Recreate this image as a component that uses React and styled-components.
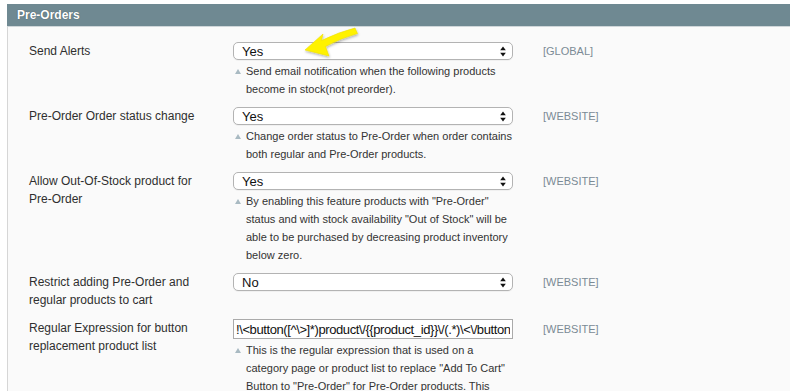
import React from "react";
import styled, { createGlobalStyle } from "styled-components";

const GlobalStyle = createGlobalStyle`
  body {
    margin: 0;
    background: #ffffff;
    font-family: "Liberation Sans", Arial, Helvetica, sans-serif;
  }
`;

const Page = styled.div`
  position: relative;
  padding: 4px 0 0 7px;
  width: 790px;
  height: 391px;
  box-sizing: border-box;
  overflow: hidden;
`;

const SectionHead = styled.div`
  height: 22px;
  background: #6f8992;
  border-bottom: 1px solid #cfd6d9;
  padding-left: 10px;
  display: flex;
  align-items: center;
`;

const SectionTitle = styled.h4`
  margin: 0;
  font-size: 12px;
  font-weight: bold;
  color: #ffffff;
  text-shadow: 0 0 1px rgba(0, 0, 0, 0.45);
`;

const Fieldset = styled.div`
  background: #fafafa;
  border-left: 1px solid #d6d6d6;
  padding: 15px 0 0 21px;
  min-height: 400px;
`;

const Row = styled.div`
  display: grid;
  grid-template-columns: 204px 280px 30px auto;
  align-items: start;
  padding-bottom: ${(p) => p.gap || 9}px;
`;

const Label = styled.div`
  font-size: 12px;
  line-height: 18px;
  color: #2f2f2f;
  padding-right: 20px;
`;

const Value = styled.div`
  display: flex;
  flex-direction: column;
`;

const SelectBox = styled.div`
  height: 18px;
  box-sizing: border-box;
  border: 1px solid #b3b3b3;
  border-radius: 5px;
  background: #ffffff;
  display: flex;
  align-items: center;
  justify-content: space-between;
  padding: 0 6px 0 8px;
  font-size: 13px;
  color: #111;
  box-shadow: 0 1px 0 rgba(0, 0, 0, 0.04);
`;

const TextInput = styled.input`
  height: 20px;
  box-sizing: border-box;
  border: 1px solid #aaaaaa;
  background: #ffffff;
  font-family: "Liberation Sans", Arial, sans-serif;
  font-size: 13px;
  letter-spacing: -0.4px;
  color: #111;
  padding: 0 2px;
  margin: 0;
  outline: none;
  width: 280px;
`;

const Note = styled.p`
  position: relative;
  margin: 2px 0 0;
  padding-left: 13px;
  font-size: 11px;
  line-height: 18px;
  color: #333;

  &::before {
    content: "";
    position: absolute;
    left: 2px;
    top: 7px;
    border-left: 3.5px solid transparent;
    border-right: 3.5px solid transparent;
    border-bottom: 5px solid #a9bac2;
  }
`;

const Scope = styled.div`
  grid-column: 4;
  font-size: 11px;
  line-height: 18px;
  padding-top: ${(p) => p.offset || 0}px;
  color: #7b8a95;
`;

const Arrow = styled.svg`
  position: absolute;
  left: 295px;
  top: 24px;
  overflow: visible;
`;

const UpDown = () => (
  <svg width="6" height="11" viewBox="0 0 6 11">
    <path d="M3 0.5 L5.8 4.3 L0.2 4.3 Z" fill="#111" />
    <path d="M3 10.5 L5.8 6.7 L0.2 6.7 Z" fill="#111" />
  </svg>
);

const Select = ({ value }) => (
  <SelectBox>
    <span>{value}</span>
    <UpDown />
  </SelectBox>
);

const rows = [
  {
    label: "Send Alerts",
    value: "Yes",
    scope: "[GLOBAL]",
    note: "Send email notification when the following products become in stock(not preorder).",
  },
  {
    label: "Pre-Order Order status change",
    value: "Yes",
    scope: "[WEBSITE]",
    note: "Change order status to Pre-Order when order contains both regular and Pre-Order products.",
  },
  {
    label: "Allow Out-Of-Stock product for Pre-Order",
    value: "Yes",
    scope: "[WEBSITE]",
    note: 'By enabling this feature products with "Pre-Order" status and with stock availability "Out of Stock" will be able to be purchased by decreasing product inventory below zero.',
  },
  {
    label: "Restrict adding Pre-Order and regular products to cart",
    value: "No",
    scope: "[WEBSITE]",
    gap: 10,
  },
];

const regex = "!\\<button([^\\>]*)product\\/{{product_id}}\\/(.*)\\<\\/button\\>!";

const App = () => (
  <Page>
    <GlobalStyle />
    <SectionHead>
      <SectionTitle>Pre-Orders</SectionTitle>
    </SectionHead>
    <Fieldset>
      {rows.map((r) => (
        <Row key={r.label} gap={r.gap}>
          <Label>{r.label}</Label>
          <Value>
            <Select value={r.value} />
            {r.note && <Note>{r.note}</Note>}
          </Value>
          <Scope>{r.scope}</Scope>
        </Row>
      ))}
      <Row>
        <Label>Regular Expression for button replacement product list</Label>
        <Value>
          <TextInput readOnly value={regex} />
          <Note>
            This is the regular expression that is used on a category page or
            product list to replace "Add To Cart" Button to "Pre-Order" for
            Pre-Order products. This
          </Note>
        </Value>
        <Scope offset={1}>[WEBSITE]</Scope>
      </Row>
    </Fieldset>
    <Arrow width="70" height="36" viewBox="0 0 70 36">
      <defs>
        <filter id="sh" x="-20%" y="-20%" width="140%" height="160%">
          <feDropShadow dx="0.5" dy="1.5" stdDeviation="1.2" floodColor="#000" floodOpacity="0.3" />
        </filter>
      </defs>
      <path
        d="M10 26 L28 10 L26.5 16.5 Q44 8 60 4 L62.5 9.5 Q46 14 30.5 22.5 L34 32 Z"
        fill="#fff200"
        stroke="#f0e000"
        strokeWidth="0.6"
        strokeLinejoin="round"
        filter="url(#sh)"
      />
    </Arrow>
  </Page>
);

export default App;
